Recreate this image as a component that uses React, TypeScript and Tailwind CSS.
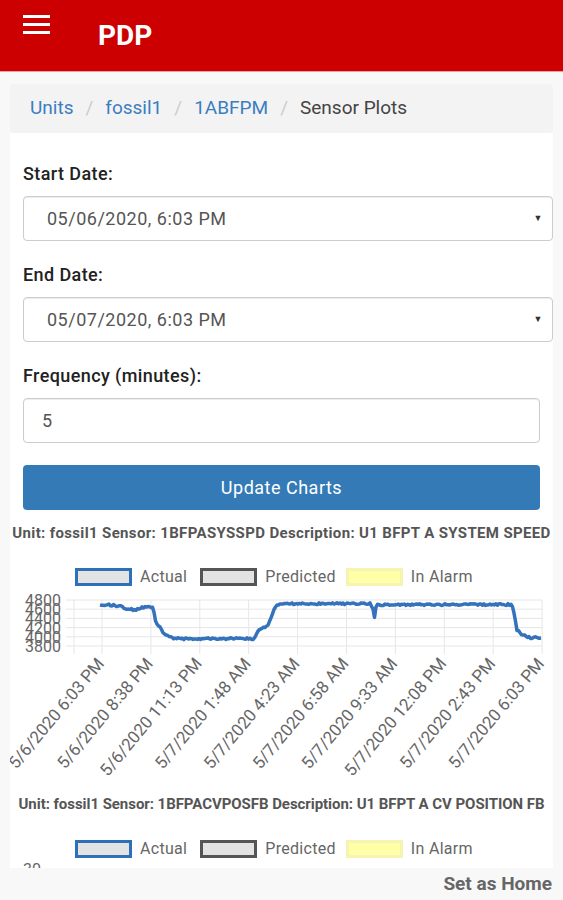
import React from "react";

const Y_LABELS = [4800, 4600, 4400, 4200, 4000, 3800];
const X_LABELS = [
  "5/6/2020 6:03 PM",
  "5/6/2020 8:38 PM",
  "5/6/2020 11:13 PM",
  "5/7/2020 1:48 AM",
  "5/7/2020 4:23 AM",
  "5/7/2020 6:58 AM",
  "5/7/2020 9:33 AM",
  "5/7/2020 12:08 PM",
  "5/7/2020 2:43 PM",
  "5/7/2020 6:03 PM",
];

// absolute x (page px) -> value
const KEYS: [number, number][] = [
  [100, 4700], [112, 4690], [122, 4660], [128, 4600], [136, 4590], [142, 4640],
  [150, 4660], [153, 4650], [156, 4300], [160, 4200], [164, 4050], [170, 3990],
  [176, 3960], [255, 3960], [258, 4150], [265, 4200], [268, 4250], [275, 4650],
  [280, 4720], [370, 4720], [373, 4600], [374, 4330], [376, 4650], [378, 4700],
  [512, 4700], [514, 4500], [517, 4150], [522, 4050], [530, 3980], [542, 3980],
];

const PLOT_TOP = 8;
const PLOT_H = 46;
const yOf = (v: number) => PLOT_TOP + ((4800 - v) / 1000) * PLOT_H;

function buildPath() {
  const out: string[] = [];
  let k = 0;
  for (let x = 100; x <= 542; x += 1.5) {
    while (k < KEYS.length - 2 && KEYS[k + 1][0] < x) k++;
    const [x0, v0] = KEYS[k];
    const [x1, v1] = KEYS[k + 1];
    const t = Math.min(1, Math.max(0, (x - x0) / (x1 - x0)));
    const noise = Math.sin(x * 12.9898) * 43758.5453;
    const n = (noise - Math.floor(noise) - 0.5) * 40;
    const v = v0 + (v1 - v0) * t + n;
    out.push(`${out.length ? "L" : "M"}${(x - 10).toFixed(1)} ${yOf(v).toFixed(1)}`);
  }
  return out.join(" ");
}

const LINE = buildPath();

function Legend() {
  return (
    <div className="flex items-center h-[18px] pl-[65px] text-[16px] tracking-[0.3px] text-[#666] leading-none">
      <span className="w-[57px] h-[18px] border-[3px] border-[#2f6fb5] bg-[#e3e3e3]" />
      <span className="ml-[8px]">Actual</span>
      <span className="ml-[13px] w-[57px] h-[18px] border-[3px] border-[#555] bg-[#e3e3e3]" />
      <span className="ml-[8px]">Predicted</span>
      <span className="ml-[10px] w-[57px] h-[18px] border-[3px] border-[#f5f5b0] bg-[#ffffa8]" />
      <span className="ml-[8px]">In Alarm</span>
    </div>
  );
}

function Chart() {
  const ticks = X_LABELS.map((_, i) => 92 + i * 48.9);
  return (
    <svg width="543" height="198" className="mt-[6px] block">
      {Y_LABELS.map((v, i) => {
        const y = PLOT_TOP + i * (PLOT_H / 5);
        return (
          <g key={v}>
            <line x1="56" x2="532" y1={y} y2={y} stroke="#e6e6e6" strokeWidth="1" />
            <text x="51" y={y + 6} textAnchor="end" fontSize="16" fill="#666" fontFamily="Roboto, sans-serif">
              {v}
            </text>
          </g>
        );
      })}
      <line x1="64" x2="64" y1={PLOT_TOP} y2={PLOT_TOP + PLOT_H + 8} stroke="#e6e6e6" />
      {ticks.map((x, i) => (
        <g key={i}>
          <line x1={x} x2={x} y1={PLOT_TOP} y2={PLOT_TOP + PLOT_H + 8} stroke="#e6e6e6" />
          <text
            x={x + 3}
            y={72}
            textAnchor="end"
            fontSize="17"
            fill="#666"
            fontFamily="Roboto, sans-serif"
            transform={`rotate(-50 ${x + 3} 72)`}
          >
            {X_LABELS[i]}
          </text>
        </g>
      ))}
      <path d={LINE} fill="none" stroke="#3473bb" strokeWidth="3.5" strokeLinejoin="round" />
    </svg>
  );
}

function Select({ value }: { value: string }) {
  return (
    <div className="w-[530px] h-[45px] border border-[#ccc] rounded-[4px] shadow-[inset_0_1px_1px_rgba(0,0,0,0.075)] flex items-center justify-between pl-[23px] pr-[9px] text-[18px] tracking-[0.5px] text-[#555]">
      <span>{value}</span>
      <span className="text-[9px] text-[#333]">▼</span>
    </div>
  );
}

const labelCls = "block h-[24px] leading-[24px] text-[18px] tracking-[0.4px] font-medium text-[#222]";
const captionCls = "h-[16px] leading-[16px] text-center whitespace-nowrap text-[15px] font-bold text-[#555]";

export default function App() {
  return (
    <div
      className="w-[563px] h-[900px] overflow-hidden bg-[#f8f8f9] flex flex-col"
      style={{ fontFamily: "Roboto, 'Liberation Sans', sans-serif" }}
    >
      <header className="h-[72px] shrink-0 bg-[#cc0000] flex items-center px-[23px] border-b border-[#e9a0a0]">
        <div className="self-start mt-[15px] w-[27px] flex flex-col gap-[5px]">
          <span className="h-[3px] bg-white" />
          <span className="h-[3px] bg-white" />
          <span className="h-[3px] bg-white" />
        </div>
        <span className="ml-[48px] text-white text-[28px] font-bold leading-none">PDP</span>
      </header>

      <main className="flex-1 min-h-0 px-[10px] pt-[12px] flex flex-col">
        <nav className="h-[49px] shrink-0 rounded-[4px] bg-[#f3f3f3] flex items-center px-[20px] text-[19px]">
          <span className="text-[#3b7dc0]">Units</span>
          <span className="mx-[12px] text-[#ccc]">/</span>
          <span className="text-[#3b7dc0]">fossil1</span>
          <span className="mx-[12px] text-[#ccc]">/</span>
          <span className="text-[#3b7dc0]">1ABFPM</span>
          <span className="mx-[12px] text-[#ccc]">/</span>
          <span className="text-[#444]">Sensor Plots</span>
        </nav>

        <section className="flex-1 min-h-0 overflow-hidden bg-white pt-[29px]">
          <div className="px-[13px]">
            <label className={labelCls}>Start Date:</label>
            <div className="mt-[10px]">
              <Select value="05/06/2020, 6:03 PM" />
            </div>
            <label className={`${labelCls} mt-[22px]`}>End Date:</label>
            <div className="mt-[10px]">
              <Select value="05/07/2020, 6:03 PM" />
            </div>
            <label className={`${labelCls} mt-[22px]`}>Frequency (minutes):</label>
            <div className="mt-[10px] h-[45px] border border-[#ccc] rounded-[4px] shadow-[inset_0_1px_1px_rgba(0,0,0,0.075)] flex items-center pl-[18px] text-[18px] text-[#555]">
              5
            </div>
            <button className="mt-[22px] w-full h-[45px] rounded-[4px] bg-[#337ab7] text-white text-[18px] tracking-[0.5px]">
              Update Charts
            </button>
          </div>

          <p className={`${captionCls} tracking-[0.35px] mt-[15px]`}>
            Unit: fossil1 Sensor: 1BFPASYSSPD Description: U1 BFPT A SYSTEM SPEED
          </p>
          <div className="mt-[27px]">
            <Legend />
          </div>
          <Chart />

          <p className={`${captionCls} tracking-[-0.05px] mt-[6px]`}>
            Unit: fossil1 Sensor: 1BFPACVPOSFB Description: U1 BFPT A CV POSITION FB
          </p>
          <div className="mt-[28px]">
            <Legend />
          </div>
          <div className="mt-[4px] pl-[13px] text-[16px] text-[#666] leading-none">30</div>
        </section>
      </main>

      <footer className="h-[32px] shrink-0 flex items-center justify-end pr-[11px] text-[19px] font-bold text-[#666]">
        Set as Home
      </footer>
    </div>
  );
}
